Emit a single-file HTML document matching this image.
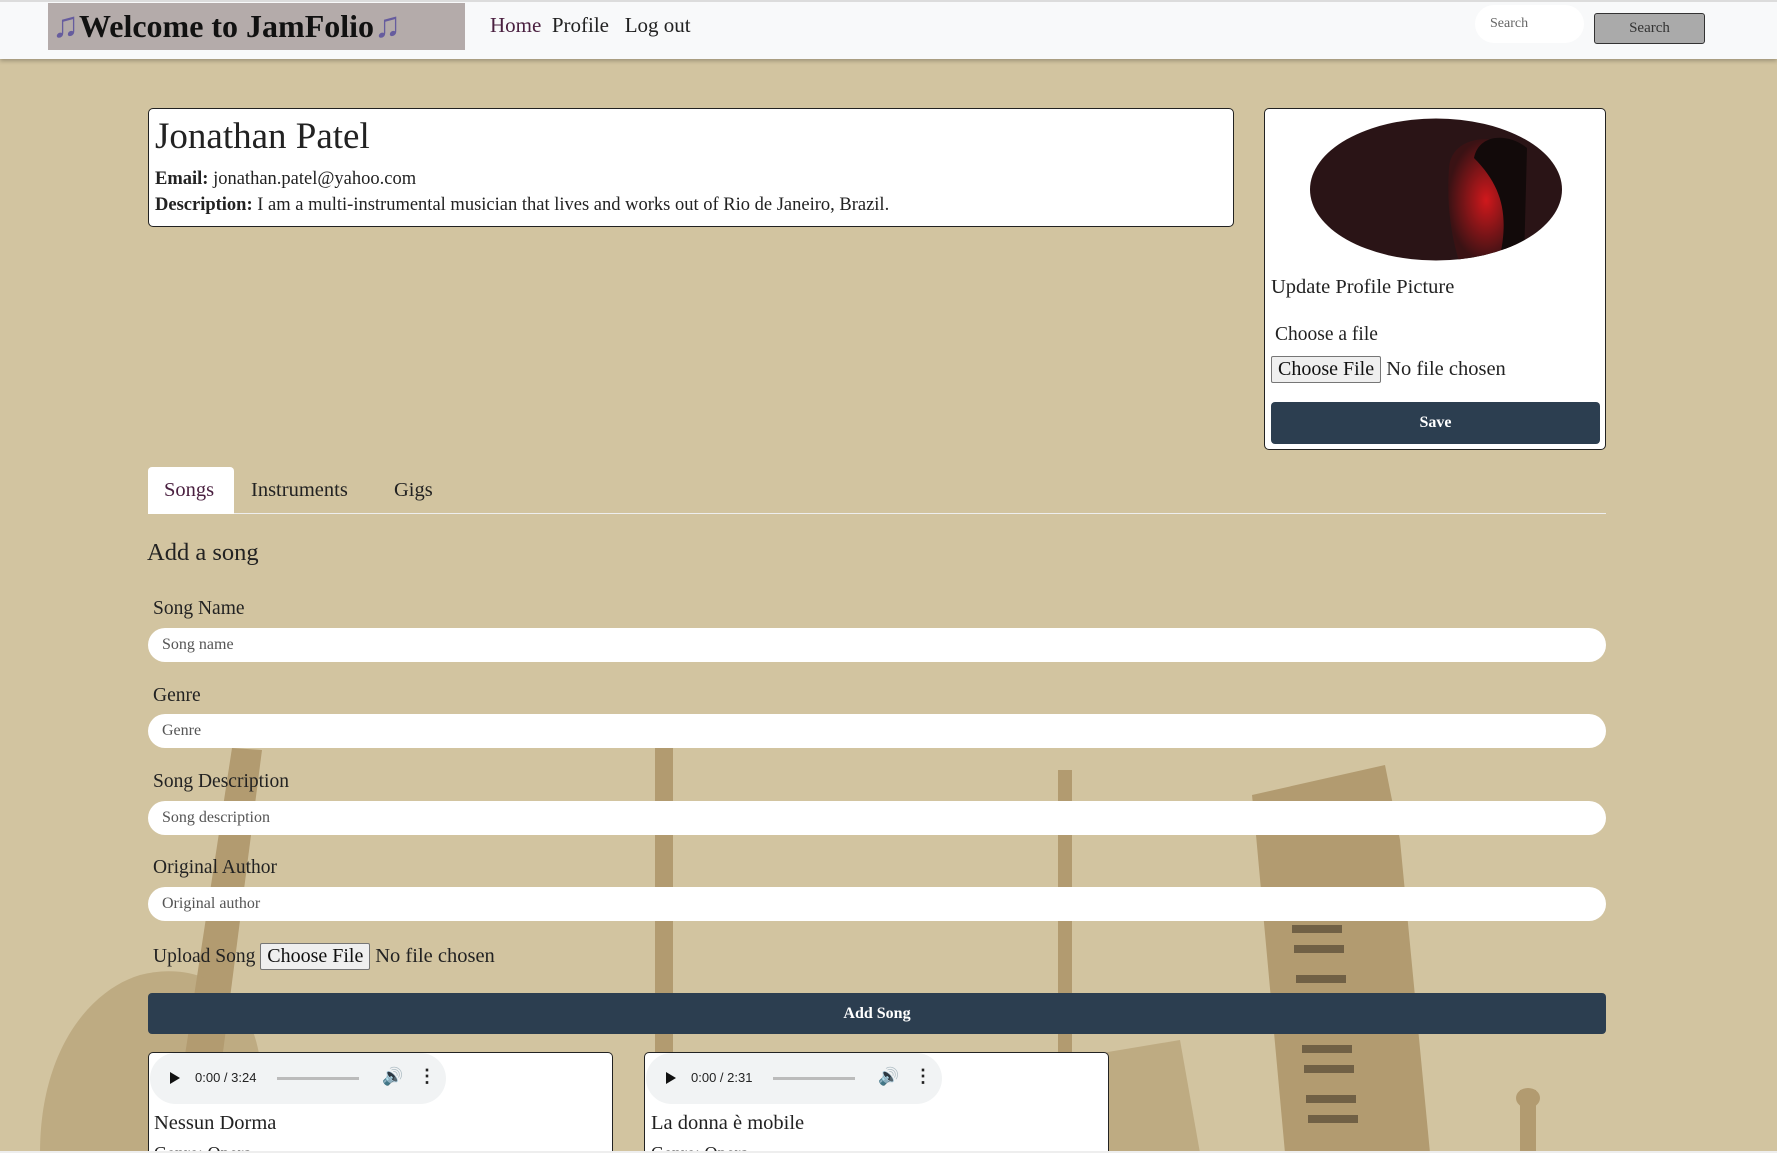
<!DOCTYPE html>
<html><head><meta charset="utf-8"><style>
*{box-sizing:border-box;margin:0;padding:0}
html,body{width:1777px;height:1153px;overflow:hidden}
body{background:#d2c4a0;font-family:"Liberation Serif",serif;color:#222;position:relative}
.a{position:absolute}
.nav{left:0;top:0;width:1777px;height:59px;background:#f8f9fa;border-top:2px solid #dcdcdc;box-shadow:0 2px 4px rgba(0,0,0,.25);z-index:5}
.card{background:#fff;border:1px solid #222;border-radius:5px}
.inp{background:#fff;border-radius:17px;height:34px;width:1458px;left:148px;font-size:16px;color:#555;padding:8px 14px}
.lbl{left:153px;font-size:19.5px;color:#222}
.btn{background:#2c3e50;color:#fff;border-radius:4px;text-align:center;font-weight:bold;font-size:16px}
.fb{background:#efefef;border:1px solid #767676;border-radius:2px;font-size:20px;padding:0 6px;display:inline-block;line-height:25px;color:#111}
.aud{background:#f1f3f4;border-radius:26px;width:296px;height:51px;font-family:"Liberation Sans",sans-serif;font-size:13px;color:#222}
</style></head><body>
<svg class="a" style="left:0;top:0" width="1777" height="1153">
<g fill="#9d8050" opacity=".6">
<polygon points="232,748 262,750 210,1153 170,1153"/>
<path d="M40,1153 C40,1050 90,990 140,975 C200,960 250,990 260,1060 L270,1153Z" opacity=".6"/>
<rect x="655" y="748" width="18" height="405"/>
<rect x="1058" y="770" width="14" height="383"/>
<polygon points="1060,1060 1180,1040 1200,1153 1070,1153" opacity=".6"/>
<polygon points="1252,795 1385,765 1400,840 1430,1153 1285,1153 1256,835"/>
<rect x="1520" y="1090" width="16" height="63"/>
<ellipse cx="1528" cy="1098" rx="12" ry="10"/>
</g>
<g fill="#1f1a12" opacity=".45">
<rect x="1290" y="905" width="50" height="8"/><rect x="1292" y="925" width="50" height="8"/><rect x="1294" y="945" width="50" height="8"/><rect x="1296" y="975" width="50" height="8"/><rect x="1298" y="995" width="50" height="8"/><rect x="1300" y="1015" width="50" height="8"/><rect x="1302" y="1045" width="50" height="8"/><rect x="1304" y="1065" width="50" height="8"/><rect x="1306" y="1095" width="50" height="8"/><rect x="1308" y="1115" width="50" height="8"/>
</g>
</svg>

<div class="a nav">
  <div class="a" style="left:48px;top:1px;width:417px;height:47px;background:#b4abaa"></div>
  <div class="a" style="left:52px;top:2px;font-size:32px;font-weight:bold;color:#111;white-space:nowrap"><span style="color:#665c9e;font-size:36px">&#9835;</span>Welcome to JamFolio<span style="color:#665c9e;font-size:36px">&#9835;</span></div>
  <div class="a" style="left:490px;top:11px;font-size:21px;color:#222;white-space:nowrap"><span style="color:#4a2040">Home</span>&nbsp;&nbsp;Profile&nbsp;&nbsp; Log out</div>
  <div class="a" style="left:1475px;top:3px;width:109px;height:38px;background:#fff;border-radius:19px;font-size:14px;color:#666;padding:11px 15px">Search</div>
  <div class="a" style="left:1594px;top:11px;width:111px;height:31px;background:#aaa;border:1px solid #333;border-radius:3px;font-size:15px;color:#333;text-align:center;line-height:29px">Search</div>
</div>

<div class="a card" style="left:148px;top:108px;width:1086px;height:119px;padding:0 6px">
  <div style="font-size:37px;margin-top:7px;line-height:42px">Jonathan Patel</div>
  <div style="font-size:18.5px;margin-top:8px;line-height:26px"><b>Email:</b> jonathan.patel@yahoo.com<br><b>Description:</b> I am a multi-instrumental musician that lives and works out of Rio de Janeiro, Brazil.</div>
</div>

<div class="a card" style="left:1264px;top:108px;width:342px;height:342px">
  <svg class="a" style="left:44px;top:9px" width="254" height="143"><defs><clipPath id="c"><ellipse cx="127" cy="71.5" rx="126" ry="71"/></clipPath><radialGradient id="g" cx=".5" cy=".5" r=".5"><stop offset="0" stop-color="#d0181c"/><stop offset="1" stop-color="#3a1214"/></radialGradient></defs>
  <g clip-path="url(#c)"><rect width="254" height="143" fill="#2a1416"/><path d="M140,50 C142,20 180,15 200,28 C205,60 200,100 215,143 L150,143 C140,110 138,80 140,50Z" fill="url(#g)"/><path d="M165,40 C170,15 200,15 218,30 L215,143 L190,143 C200,100 195,70 165,40Z" fill="#120a0a"/></g></svg>
  <div class="a" style="left:6px;top:167px;font-size:20.5px">Update Profile Picture</div>
  <div class="a" style="left:10px;top:215px;font-size:19.5px">Choose a file</div>
  <div class="a" style="left:6px;top:247px;white-space:nowrap;font-size:20.5px"><span class="fb">Choose File</span> No file chosen</div>
  <div class="a btn" style="left:6px;top:293px;width:329px;height:42px;line-height:42px">Save</div>
</div>

<div class="a" style="left:148px;top:513px;width:1458px;height:1px;background:#eee"></div>
<div class="a" style="left:148px;top:467px;width:86px;height:47px;background:#fff;border-radius:4px 4px 0 0"></div>
<div class="a" style="left:164px;top:479px;font-size:20.5px;color:#4a2040">Songs</div>
<div class="a" style="left:251px;top:479px;font-size:20.5px">Instruments</div>
<div class="a" style="left:394px;top:479px;font-size:20.5px">Gigs</div>

<div class="a" style="left:147px;top:539px;font-size:24.5px">Add a song</div>

<div class="a lbl" style="top:598px">Song Name</div>
<div class="a inp" style="top:628px">Song name</div>
<div class="a lbl" style="top:685px">Genre</div>
<div class="a inp" style="top:714px">Genre</div>
<div class="a lbl" style="top:771px">Song Description</div>
<div class="a inp" style="top:801px">Song description</div>
<div class="a lbl" style="top:857px">Original Author</div>
<div class="a inp" style="top:887px">Original author</div>
<div class="a" style="left:153px;top:943px;font-size:19.5px;white-space:nowrap">Upload Song <span class="fb">Choose File</span> <span style="font-size:20.5px">No file chosen</span></div>

<div class="a btn" style="left:148px;top:993px;width:1458px;height:41px;line-height:41px">Add Song</div>

<div class="a card" style="left:148px;top:1052px;width:465px;height:101px;border-bottom:none;border-radius:5px 5px 0 0;overflow:hidden"><div class="a" style="left:5px;top:90px;font-size:18px;line-height:20px">Genre: Opera</div></div>
<div class="a card" style="left:644px;top:1052px;width:465px;height:101px;border-bottom:none;border-radius:5px 5px 0 0;overflow:hidden"><div class="a" style="left:6px;top:90px;font-size:18px;line-height:20px">Genre: Opera</div></div>
<div class="a aud" style="left:150px;top:1053px">
  <span class="a" style="left:20px;top:19px;border-left:10px solid #111;border-top:6px solid transparent;border-bottom:6px solid transparent"></span>
  <span class="a" style="left:45px;top:17px">0:00 / 3:24</span>
  <span class="a" style="left:127px;top:24px;width:82px;height:3px;background:#bbb"></span>
  <span class="a" style="left:232px;top:14px;font-size:17px">&#128266;</span>
  <span class="a" style="left:268px;top:13px;font-size:18px;font-weight:bold">&#8942;</span>
</div>
<div class="a aud" style="left:646px;top:1053px">
  <span class="a" style="left:20px;top:19px;border-left:10px solid #111;border-top:6px solid transparent;border-bottom:6px solid transparent"></span>
  <span class="a" style="left:45px;top:17px">0:00 / 2:31</span>
  <span class="a" style="left:127px;top:24px;width:82px;height:3px;background:#bbb"></span>
  <span class="a" style="left:232px;top:14px;font-size:17px">&#128266;</span>
  <span class="a" style="left:268px;top:13px;font-size:18px;font-weight:bold">&#8942;</span>
</div>
<div class="a" style="left:154px;top:1112px;font-size:20.5px">Nessun Dorma</div>
<div class="a" style="left:651px;top:1112px;font-size:20.5px">La donna è mobile</div>
<div class="a" style="left:0;top:1151px;width:1777px;height:2px;background:#eee"></div>
</body></html>
